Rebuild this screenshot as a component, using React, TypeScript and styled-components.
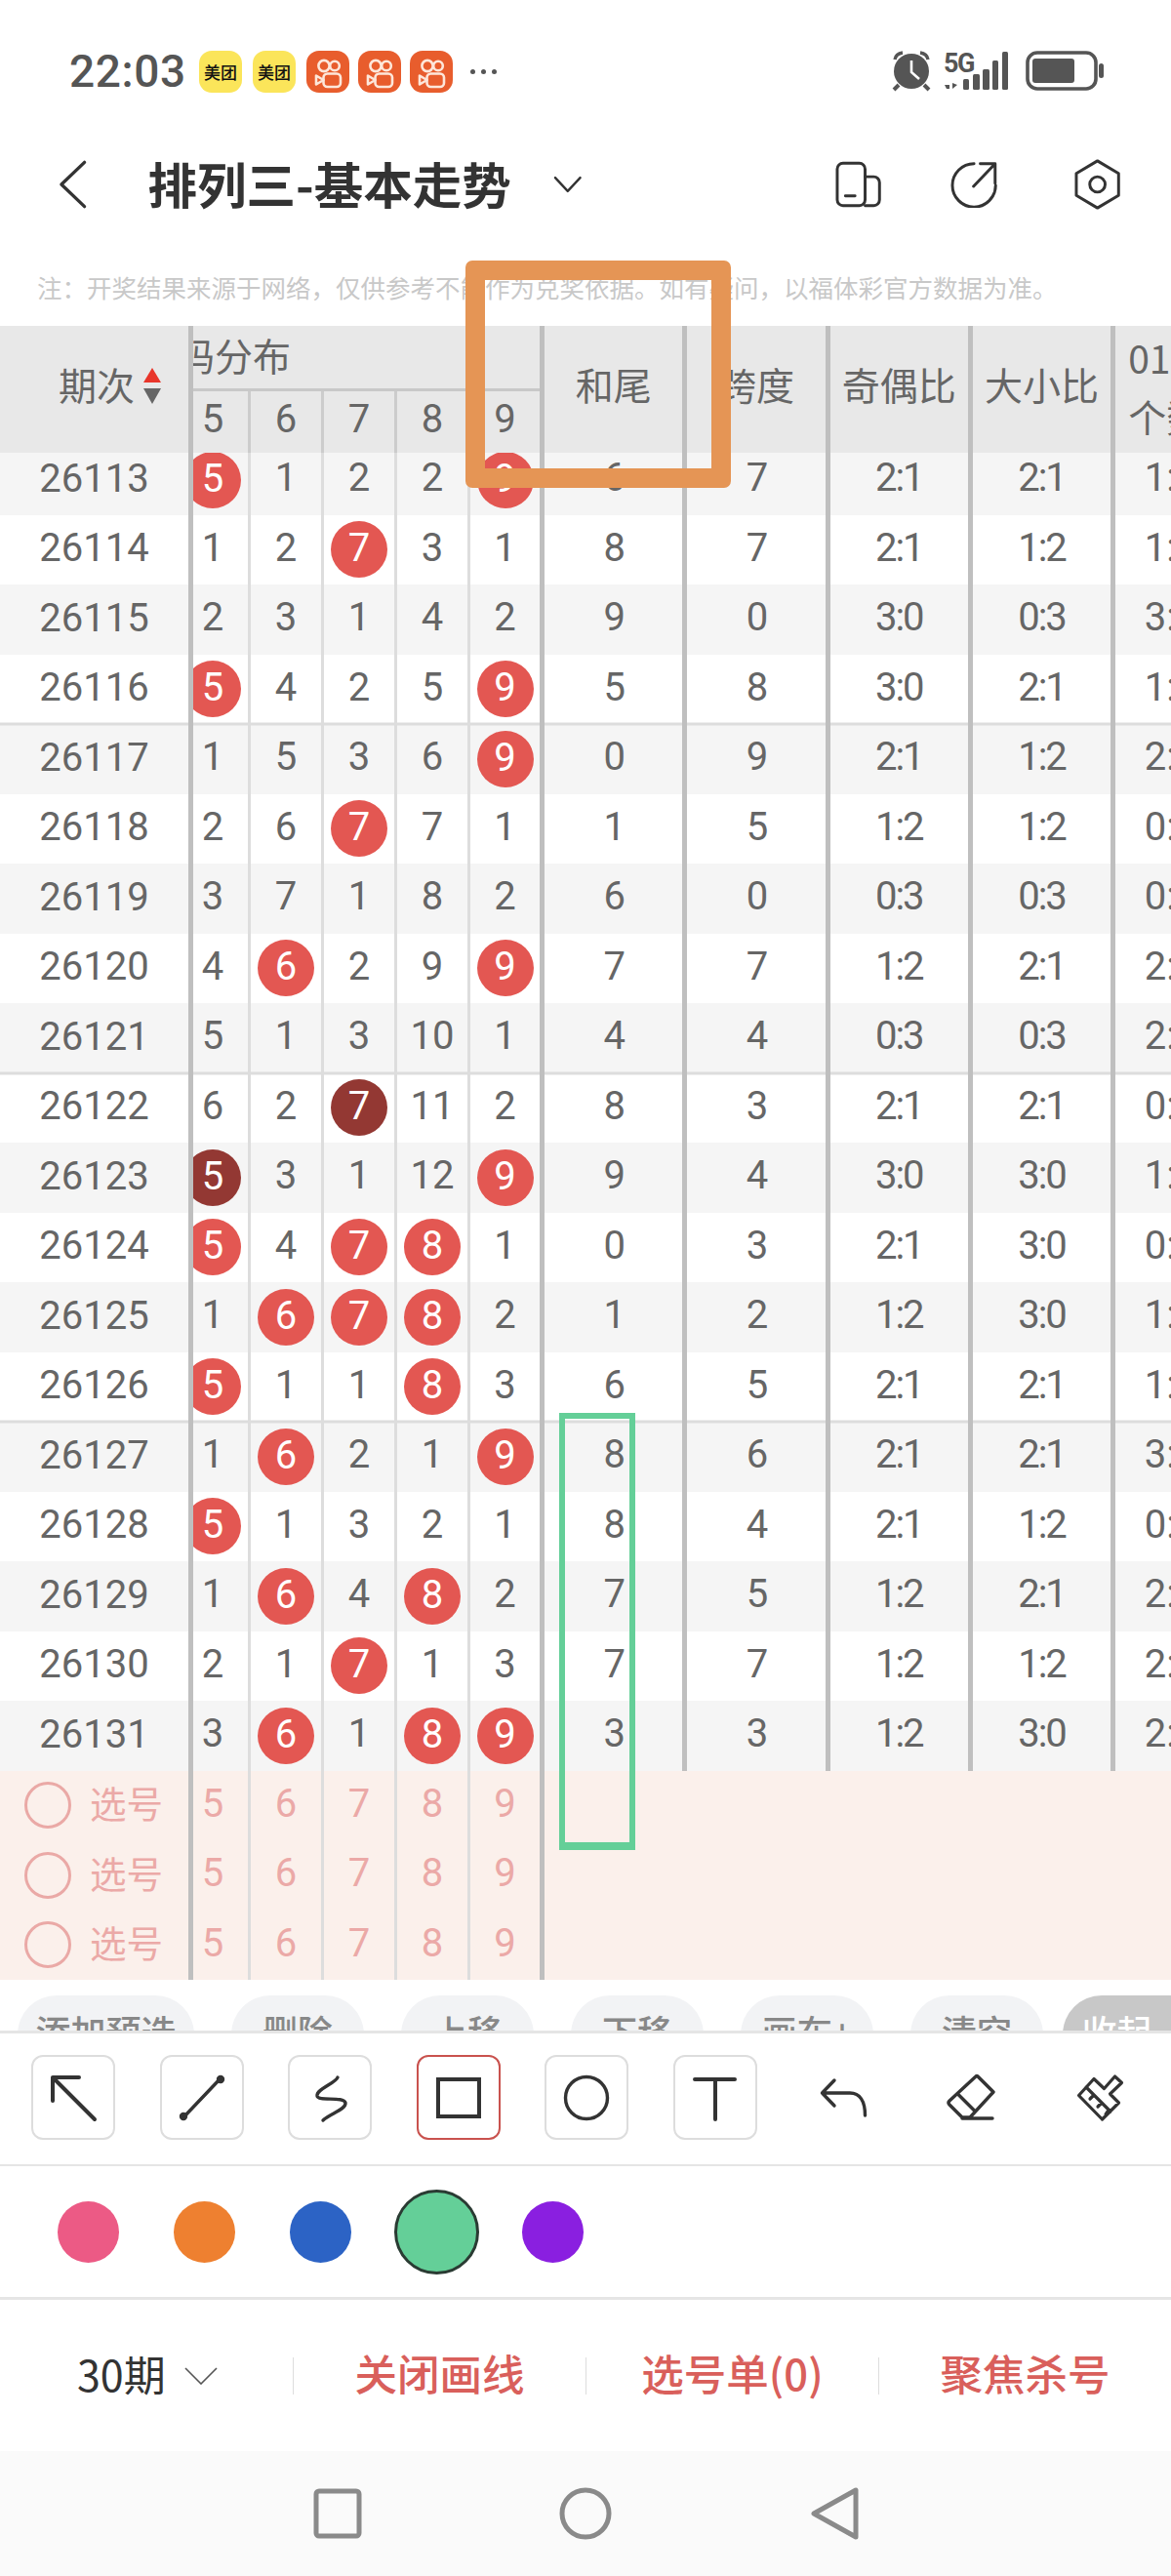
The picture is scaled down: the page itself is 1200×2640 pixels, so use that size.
import React from 'react'
import styled, { createGlobalStyle } from 'styled-components'

const GlobalStyle = createGlobalStyle`
  html, body {
    margin: 0;
    padding: 0;
    background: #fff;
  }
  * {
    box-sizing: border-box;
  }
`

const Page = styled.div`
  position: relative;
  width: 1200px;
  height: 2640px;
  overflow: hidden;
  background: #fff;
  font-family: Roboto, 'Noto Sans CJK SC', sans-serif;
  color: #666;
`

const StatusBar = styled.div`
  display: flex;
  align-items: center;
  height: 146px;
  padding: 0 68px 0 71px;
`

const Clock = styled.span`
  width: 133px;
  font-size: 46px;
  font-weight: 500;
  letter-spacing: 0.6px;
  color: #555;
`

const Notice = styled.div<{ $kind: 'meituan' | 'video' }>`
  display: flex;
  align-items: center;
  justify-content: center;
  width: 44px;
  height: 43px;
  margin-right: ${p => (p.$kind === 'meituan' ? '11px' : '9px')};
  border-radius: 13px;
  background: ${p => (p.$kind === 'meituan' ? '#fbe55a' : '#e85d2d')};
  color: #111;
  font: 500 17px 'Noto Sans CJK SC', sans-serif;
  white-space: nowrap;
`

const MoreDots = styled.div`
  display: flex;
  gap: 6px;
  margin-left: 9px;
  i {
    width: 5px;
    height: 5px;
    border-radius: 50%;
    background: #555;
  }
`

const StatusIcons = styled.svg`
  display: block;
  margin-left: auto;
`

const NavBar = styled.div`
  display: flex;
  align-items: center;
  height: 86px;
  padding: 0 52px 0 59px;
`

const Title = styled.h1`
  margin: -5px 43px 0 61px;
  font: 700 50.5px 'Noto Sans CJK SC', sans-serif;
  color: #333;
  white-space: nowrap;
`

const NavIcon = styled.svg<{ $gap: number }>`
  display: block;
  margin-left: ${p => p.$gap}px;
`

const Note = styled.div`
  height: 102px;
  padding: 44px 0 0 38px;
  font: 400 25.5px/36px 'Noto Sans CJK SC', sans-serif;
  color: #c8c8c8;
  white-space: nowrap;
`

const HeaderRow = styled.div`
  display: flex;
  height: 130px;
  background: #e8e8e8;
  font-size: 39px;
  font-family: 'Noto Sans CJK SC', sans-serif;
`

const Lead = styled.div<{ $pad?: number }>`
  display: flex;
  flex: none;
  align-items: center;
  justify-content: ${p => (p.$pad ? 'flex-start' : 'center')};
  width: 198px;
  padding-left: ${p => p.$pad || 0}px;
  border-right: 5px solid #bfbfbf;
`

const Track = styled.div`
  flex: 1;
  min-width: 0;
  overflow: hidden;
`

const TrackInner = styled.div`
  display: flex;
  height: 100%;
  margin-left: -16px;
`

const GroupHead = styled.div`
  flex: none;
  width: 376px;
  border-right: 5px solid #bfbfbf;
`

const GroupTitle = styled.div`
  display: flex;
  align-items: center;
  height: 67px;
  padding-bottom: 6px;
  border-bottom: 3.5px solid #c8c8c8;
  white-space: nowrap;
  span {
    margin-left: -40px;
  }
`

const GroupDigits = styled.div`
  display: flex;
  height: 63px;
  font: 400 40px Roboto, sans-serif;
  > div {
    padding-bottom: 6px;
    border-right-color: #ccc;
  }
`

const DigitCell = styled.div<{ $last?: boolean; $wide?: boolean }>`
  display: flex;
  flex: none;
  align-items: center;
  justify-content: center;
  width: ${p => (p.$wide ? '76px' : p.$last ? '71px' : '75px')};
  height: 100%;
  border-right: ${p => (p.$wide ? '5px solid #bfbfbf' : p.$last ? 'none' : '3px solid #ddd')};
`

const HeadCell = styled.div`
  display: flex;
  flex: none;
  align-items: center;
  justify-content: center;
  width: 146.3px;
  padding-bottom: 12px;
  border-right: 5px solid #bfbfbf;
  white-space: nowrap;
`

const HeadLastCell = styled.div`
  flex: none;
  width: 146px;
  padding: 2px 0 0 13px;
  line-height: 60px;
  white-space: nowrap;
`

const Rows = styled.div`
  overflow: hidden;
`

const Row = styled.div<{ $alt: boolean; $first: boolean; $rule?: 'top' | 'bottom' }>`
  display: flex;
  height: 71.5px;
  margin-top: ${p => (p.$first ? '-8px' : '0')};
  background: ${p => (p.$alt ? '#f5f5f5' : '#fff')};
  box-shadow: ${p =>
    p.$rule === 'top' ? 'inset 0 1.5px 0 #ddd' : p.$rule === 'bottom' ? 'inset 0 -1.5px 0 #ddd' : 'none'};
  font-size: 40px;
  line-height: 1;
`

const Cell = styled.div<{ $wide?: boolean }>`
  display: flex;
  flex: none;
  align-items: center;
  justify-content: center;
  width: ${p => (p.$wide ? '146px' : '146.3px')};
  height: 100%;
  letter-spacing: ${p => (p.$wide ? '0' : '-2px')};
  white-space: nowrap;
  border-right: ${p => (p.$wide ? 'none' : '5px solid #bfbfbf')};
`

const Period = styled.span`
  margin-top: -2px;
`

const Ball = styled.span<{ $dark?: boolean }>`
  display: flex;
  align-items: center;
  justify-content: center;
  width: 58px;
  height: 58px;
  padding-bottom: 2px;
  border-radius: 50%;
  background: ${p => (p.$dark ? '#933833' : '#e35752')};
  color: #fff;
`

const Plain = styled.span`
  margin-top: -3px;
`

const PickRow = styled.div`
  display: flex;
  height: 71.5px;
  background: #fbf0eb;
  color: #eba9a7;
  font-size: 40px;
  line-height: 1;
`

const Radio = styled.span`
  flex: none;
  width: 48px;
  height: 48px;
  margin-right: 19px;
  border: 3px solid #eaa9a6;
  border-radius: 50%;
`

const PickLabel = styled.span`
  margin-top: -7px;
  font: 400 37.5px 'Noto Sans CJK SC', sans-serif;
`

const PillRow = styled.div`
  display: flex;
  gap: 38px;
  height: 52px;
  padding: 16px 0 0 18px;
  overflow: hidden;
`

const Pill = styled.div<{ $collapse?: boolean }>`
  flex: none;
  min-width: ${p => (p.$collapse ? '111px' : '136px')};
  height: 80px;
  margin-left: ${p => (p.$collapse ? '-18px' : '0')};
  padding: 0 18.5px;
  border-radius: ${p => (p.$collapse ? '40px 0 0 40px' : '40px')};
  background: ${p => (p.$collapse ? '#c8c8c8' : '#f2f3f5')};
  color: ${p => (p.$collapse ? '#fff' : '#888')};
  font: 500 36px/72px 'Noto Sans CJK SC', sans-serif;
  text-align: center;
  white-space: nowrap;
`

const Toolbar = styled.div`
  display: flex;
  align-items: center;
  height: 139px;
  padding: 0 0 3px 32px;
  border-top: 3px solid #e5e5e5;
  border-bottom: 2px solid #e5e5e5;
`

const ToolButton = styled.div<{ $active?: boolean }>`
  display: flex;
  flex: none;
  align-items: center;
  justify-content: center;
  width: 86px;
  height: 87px;
  margin-right: 45.5px;
  border: 2px solid ${p => (p.$active ? '#c9524e' : '#ddd')};
  border-radius: 12px;
`

const ToolIcon = styled.svg<{ $left?: number }>`
  display: block;
  flex: none;
  margin-left: ${p => p.$left || 0}px;
  overflow: visible;
`

const ColorRow = styled.div`
  display: flex;
  align-items: center;
  gap: 56px;
  height: 137px;
  padding-left: 59px;
  border-bottom: 3px solid #e5e5e5;
`

const Swatch = styled.div<{ $selected?: boolean }>`
  flex: none;
  width: ${p => (p.$selected ? '87px' : '63px')};
  height: ${p => (p.$selected ? '87px' : '63px')};
  margin: ${p => (p.$selected ? '0 -12px' : '0')};
  border-radius: 50%;
  border: ${p => (p.$selected ? '3px solid #2a3b33' : 'none')};
`

const ActionBar = styled.div`
  display: flex;
  align-items: center;
  height: 155px;
`

const Action = styled.div<{ $plain?: boolean }>`
  display: flex;
  flex: none;
  align-items: center;
  justify-content: ${p => (p.$plain ? 'flex-start' : 'center')};
  width: 300px;
  height: 38px;
  padding-left: ${p => (p.$plain ? '79px' : '0')};
  border-left: ${p => (p.$plain ? 'none' : '1px solid #ddd')};
  color: ${p => (p.$plain ? '#333' : '#d95f5b')};
  font: ${p => (p.$plain ? 400 : 500)} ${p => (p.$plain ? 43 : 43.5)}px 'Noto Sans CJK SC', Roboto, sans-serif;
  white-space: nowrap;
  span {
    margin-top: -6px;
  }
`

const PeriodChevron = styled.svg`
  display: block;
  margin-left: 19px;
`

const SystemNav = styled.div`
  display: flex;
  align-items: center;
  justify-content: center;
  gap: 199px;
  height: 128px;
  background: #fafafa;
`

const Annotation = styled.div<{ $color: string; $width: number }>`
  position: absolute;
  border: ${p => p.$width}px solid ${p => p.$color};
`

const OrangeMark = styled(Annotation)`
  left: 477px;
  top: 267px;
  width: 272px;
  height: 233px;
  border-radius: 7px;
`

const GreenMark = styled(Annotation)`
  left: 573px;
  top: 1448px;
  width: 78px;
  height: 448px;
  border-bottom-width: 8px;
`

const digits = ['5', '6', '7', '8', '9']

type RowData = [string, string[], string, string, string, string, string]

// "!" marks a hit, "#" a repeated hit
const rows: RowData[] = [
  ['26113', ['5!', '1', '2', '2', '9!'], '6', '7', '2:1', '2:1', '1:1:1'],
  ['26114', ['1', '2', '7!', '3', '1'], '8', '7', '2:1', '1:2', '1:1:1'],
  ['26115', ['2', '3', '1', '4', '2'], '9', '0', '3:0', '0:3', '3:0:0'],
  ['26116', ['5!', '4', '2', '5', '9!'], '5', '8', '3:0', '2:1', '1:1:1'],
  ['26117', ['1', '5', '3', '6', '9!'], '0', '9', '2:1', '1:2', '2:1:0'],
  ['26118', ['2', '6', '7!', '7', '1'], '1', '5', '1:2', '1:2', '0:2:1'],
  ['26119', ['3', '7', '1', '8', '2'], '6', '0', '0:3', '0:3', '0:3:0'],
  ['26120', ['4', '6!', '2', '9', '9!'], '7', '7', '1:2', '2:1', '2:0:1'],
  ['26121', ['5', '1', '3', '10', '1'], '4', '4', '0:3', '0:3', '2:1:0'],
  ['26122', ['6', '2', '7#', '11', '2'], '8', '3', '2:1', '2:1', '0:2:1'],
  ['26123', ['5#', '3', '1', '12', '9!'], '9', '4', '3:0', '3:0', '1:1:1'],
  ['26124', ['5!', '4', '7!', '8!', '1'], '0', '3', '2:1', '3:0', '0:1:2'],
  ['26125', ['1', '6!', '7!', '8!', '2'], '1', '2', '1:2', '3:0', '1:1:1'],
  ['26126', ['5!', '1', '1', '8!', '3'], '6', '5', '2:1', '2:1', '1:1:1'],
  ['26127', ['1', '6!', '2', '1', '9!'], '8', '6', '2:1', '2:1', '3:0:0'],
  ['26128', ['5!', '1', '3', '2', '1'], '8', '4', '2:1', '1:2', '0:2:1'],
  ['26129', ['1', '6!', '4', '8!', '2'], '7', '5', '1:2', '2:1', '2:0:1'],
  ['26130', ['2', '1', '7!', '1', '3'], '7', '7', '1:2', '1:2', '2:1:0'],
  ['26131', ['3', '6!', '1', '8!', '9!'], '3', '3', '1:2', '3:0', '2:0:1'],
]

const swatches = ['#ec5a85', '#ee8030', '#2c63c5', '#64cf98', '#8a1fe0']
const pills = ['添加预选', '删除', '上移', '下移', '画布+', '清空']

const ruleFor = (i: number) => {
  if (i === 3 || i === 8 || i === 13) return 'bottom'
  if (i === 4 || i === 9 || i === 14) return 'top'
  return undefined
}

const Value = ({ raw }: { raw: string }) => {
  const mark = raw.slice(-1)
  if (mark === '!' || mark === '#') {
    return <Ball $dark={mark === '#'}>{raw.slice(0, -1)}</Ball>
  }
  return <Plain>{raw}</Plain>
}

const VideoGlyph = () => (
  <svg width="44" height="43" viewBox="0 0 44 43" fill="none" stroke="#fde7da" strokeWidth="2.6">
    <circle cx="18" cy="15.5" r="5.6" />
    <circle cx="29" cy="15.5" r="4.8" />
    <rect x="17.5" y="23.5" width="17.5" height="13.5" rx="4" />
    <path d="M17.5 30 L10 25.5 V34.5 Z" strokeLinejoin="round" />
  </svg>
)

const StatusGlyphs = () => (
  <StatusIcons width="218" height="44" viewBox="0 0 218 44" fill="#555">
    <circle cx="20" cy="22" r="18" />
    <path d="M20 11 V23 L28 30" fill="none" stroke="#fff" strokeWidth="2.6" />
    <path d="M3 10 Q4 4 11 3 M37 10 Q36 4 29 3" fill="none" stroke="#555" strokeWidth="3.4" />
    <path d="M7 36 L2 41 M33 36 L38 41" stroke="#555" strokeWidth="4" />
    <text x="53" y="23" fontFamily="Roboto, sans-serif" fontSize="27" fontWeight="700" letterSpacing="-1.5">5G</text>
    <path d="M59 30 V40 H56 L54 36 H59 M62 30 V40 L67 36 L62 34" />
    <rect x="73" y="30" width="6" height="11" rx="1.5" />
    <rect x="83" y="25" width="7" height="16" rx="1.5" />
    <rect x="93" y="20" width="7" height="21" rx="1.5" />
    <rect x="103" y="11" width="6" height="30" rx="1.5" />
    <rect x="113" y="2" width="6" height="39" rx="1.5" />
    <rect x="139" y="3" width="70" height="37" rx="10" fill="none" stroke="#555" strokeWidth="3.6" />
    <rect x="144" y="9" width="43" height="25" rx="3" />
    <rect x="212" y="14" width="5" height="15" rx="2.5" />
  </StatusIcons>
)

const Stroke = { fill: 'none', stroke: '#333', strokeLinecap: 'round', strokeLinejoin: 'round' } as const

const App = () => {
  return (
    <Page>
      <GlobalStyle />
      <StatusBar>
        <Clock>22:03</Clock>
        <Notice $kind="meituan">美团</Notice>
        <Notice $kind="meituan">美团</Notice>
        <Notice $kind="video"><VideoGlyph /></Notice>
        <Notice $kind="video"><VideoGlyph /></Notice>
        <Notice $kind="video"><VideoGlyph /></Notice>
        <MoreDots><i /><i /><i /></MoreDots>
        <StatusGlyphs />
      </StatusBar>

      <NavBar>
        <svg width="32" height="52" viewBox="0 0 32 52" {...Stroke} strokeWidth="3.4">
          <path d="M28 3 L4 26 L28 49" />
        </svg>
        <Title>排列三-基本走势</Title>
        <svg width="30" height="18" viewBox="0 0 30 18" {...Stroke} strokeWidth="2.4">
          <path d="M2 2 L15 16 L28 2" />
        </svg>
        <NavIcon $gap={260} width="48" height="48" viewBox="0 0 48 48" {...Stroke} strokeWidth="3">
          <rect x="2" y="2" width="29" height="44" rx="6" />
          <path d="M31 16 H40 A6 6 0 0 1 46 22 V40 A6 6 0 0 1 40 46 H31 M10.5 36 H20.5" />
        </NavIcon>
        <NavIcon $gap={71} width="48" height="48" viewBox="0 0 48 48" {...Stroke} strokeWidth="3">
          <path d="M24.5 2.5 A22.5 22.5 0 1 0 47 25 M24 26 L46 3 M31 2.5 H46.5 V23" />
        </NavIcon>
        <NavIcon $gap={79} width="48" height="52" viewBox="0 0 48 52" {...Stroke} strokeWidth="3">
          <path d="M24 1.5 L46 14.5 V37.5 L24 50.5 L2 37.5 V14.5 Z" />
          <circle cx="24" cy="26" r="8" />
        </NavIcon>
      </NavBar>

      <Note>注：开奖结果来源于网络，仅供参考不能作为兑奖依据。如有疑问，以福体彩官方数据为准。</Note>

      <HeaderRow>
        <Lead $pad={60}>
          <span style={{ marginTop: -12 }}>期次</span>
          <svg width="20" height="38" viewBox="0 0 20 38" style={{ marginLeft: 8, marginTop: -6 }}>
            <path d="M10 0 L19 15 H1 Z" fill="#e8352a" />
            <path d="M1 21 H19 L10 37 Z" fill="#666" />
          </svg>
        </Lead>
        <Track>
          <TrackInner>
            <GroupHead>
              <GroupTitle><span>号码分布</span></GroupTitle>
              <GroupDigits>
                {digits.map((d, i) => (
                  <DigitCell key={d} $last={i === 4}>{d}</DigitCell>
                ))}
              </GroupDigits>
            </GroupHead>
            <HeadCell>和尾</HeadCell>
            <HeadCell>跨度</HeadCell>
            <HeadCell>奇偶比</HeadCell>
            <HeadCell>大小比</HeadCell>
            <HeadLastCell>012路<br />个数比</HeadLastCell>
          </TrackInner>
        </Track>
      </HeaderRow>

      <Rows>
        {rows.map(([period, balls, sum, span, odd, size, route], i) => (
          <Row key={period} $alt={i % 2 === 0} $first={i === 0} $rule={ruleFor(i)}>
            <Lead><Period>{period}</Period></Lead>
            <Track>
              <TrackInner>
                {balls.map((b, j) => (
                  <DigitCell key={j} $wide={j === 4}><Value raw={b} /></DigitCell>
                ))}
                <Cell><Plain>{sum}</Plain></Cell>
                <Cell><Plain>{span}</Plain></Cell>
                <Cell><Plain>{odd}</Plain></Cell>
                <Cell><Plain>{size}</Plain></Cell>
                <Cell $wide><Plain>{route}</Plain></Cell>
              </TrackInner>
            </Track>
          </Row>
        ))}
      </Rows>

      {[0, 1, 2].map(n => (
        <PickRow key={n}>
          <Lead $pad={25}>
            <Radio />
            <PickLabel>选号</PickLabel>
          </Lead>
          <Track>
            <TrackInner>
              {digits.map((d, j) => (
                <DigitCell key={d} $wide={j === 4}><Plain>{d}</Plain></DigitCell>
              ))}
            </TrackInner>
          </Track>
        </PickRow>
      ))}

      <PillRow>
        {pills.map(label => (
          <Pill key={label}>{label}</Pill>
        ))}
        <Pill $collapse>收起</Pill>
      </PillRow>

      <Toolbar>
        <ToolButton>
          <ToolIcon width="48" height="48" viewBox="0 0 48 48" {...Stroke} strokeWidth="4">
            <path d="M3 27 V3 H30 M3 3 L46 46" />
          </ToolIcon>
        </ToolButton>
        <ToolButton>
          <ToolIcon width="48" height="48" viewBox="0 0 48 48" {...Stroke} strokeWidth="3.4">
            <path d="M5 44 L43 4" />
            <circle cx="5" cy="43" r="2.5" fill="#333" />
            <circle cx="43" cy="5" r="2.5" fill="#333" />
          </ToolIcon>
        </ToolButton>
        <ToolButton>
          <ToolIcon width="48" height="48" viewBox="0 0 48 48" {...Stroke} strokeWidth="3.4">
            <path d="M32 3 C30 9 10 15 11 22 C12 28 38 22 40 29 C41 36 24 40 17 47" />
          </ToolIcon>
        </ToolButton>
        <ToolButton $active>
          <ToolIcon width="48" height="48" viewBox="0 0 48 48" {...Stroke} strokeWidth="4" strokeLinejoin="miter">
            <rect x="3" y="5" width="42" height="38" />
          </ToolIcon>
        </ToolButton>
        <ToolButton>
          <ToolIcon width="48" height="48" viewBox="0 0 48 48" {...Stroke} strokeWidth="3.4">
            <circle cx="24" cy="24" r="21.5" />
          </ToolIcon>
        </ToolButton>
        <ToolButton>
          <ToolIcon width="48" height="48" viewBox="0 0 48 48" {...Stroke} strokeWidth="4">
            <path d="M3 5 H44 M24 5 V46" />
          </ToolIcon>
        </ToolButton>
        <ToolIcon $left={19.5} width="48" height="48" viewBox="0 0 48 48" {...Stroke} strokeWidth="3.4">
          <path d="M14 6 L1.5 19 L14 32 M1.5 19 H30 C40 19 45.5 27 45.5 42" />
        </ToolIcon>
        <ToolIcon $left={82} width="48" height="48" viewBox="0 0 48 48" {...Stroke} strokeWidth="3.4">
          <path d="M31 2 L47 18 L23 44 H15 L2 31 Q0 29 2 27 L29 2 Q30 1 31 2 Z M10.5 20 L27.5 37 M15 45 H46" />
        </ToolIcon>
        <ToolIcon $left={85} width="48" height="48" viewBox="0 0 48 48" {...Stroke} strokeWidth="3.2">
          <path d="M1.5 21.5 L17 4.5 L27.5 14.5 L38.5 2 L45.5 8.5 L33.5 20 L42.5 29 L25.5 46 Z M9 13 L34 38 M13 25 L17 21 M21 33 L25 29 M29 41 L31 38" />
        </ToolIcon>
      </Toolbar>

      <ColorRow>
        {swatches.map((c, i) => (
          <Swatch key={c} $selected={i === 3} style={{ background: c }} />
        ))}
      </ColorRow>

      <ActionBar>
        <Action $plain>
          <span>30期</span>
          <PeriodChevron width="34" height="18" viewBox="0 0 34 18" fill="none" stroke="#555" strokeWidth="1.6">
            <path d="M1 1 L17 17 L33 1" />
          </PeriodChevron>
        </Action>
        <Action><span>关闭画线</span></Action>
        <Action><span>选号单(0)</span></Action>
        <Action><span>聚焦杀号</span></Action>
      </ActionBar>

      <SystemNav>
        <svg width="56" height="54" viewBox="0 0 56 54" fill="none" stroke="#8a8a8a" strokeWidth="5" strokeLinejoin="round">
          <rect x="7" y="4" width="44" height="46" rx="3" />
        </svg>
        <svg width="56" height="54" viewBox="0 0 56 54" fill="none" stroke="#8a8a8a" strokeWidth="5">
          <circle cx="28" cy="27" r="24" />
        </svg>
        <svg width="56" height="54" viewBox="0 0 56 54" fill="none" stroke="#8a8a8a" strokeWidth="5" strokeLinejoin="round">
          <path d="M50 3 V51 L7 27 Z" />
        </svg>
      </SystemNav>

      <OrangeMark $color="#e59555" $width={20} />
      <GreenMark $color="#64cf98" $width={6} />
    </Page>
  )
}

export default App
